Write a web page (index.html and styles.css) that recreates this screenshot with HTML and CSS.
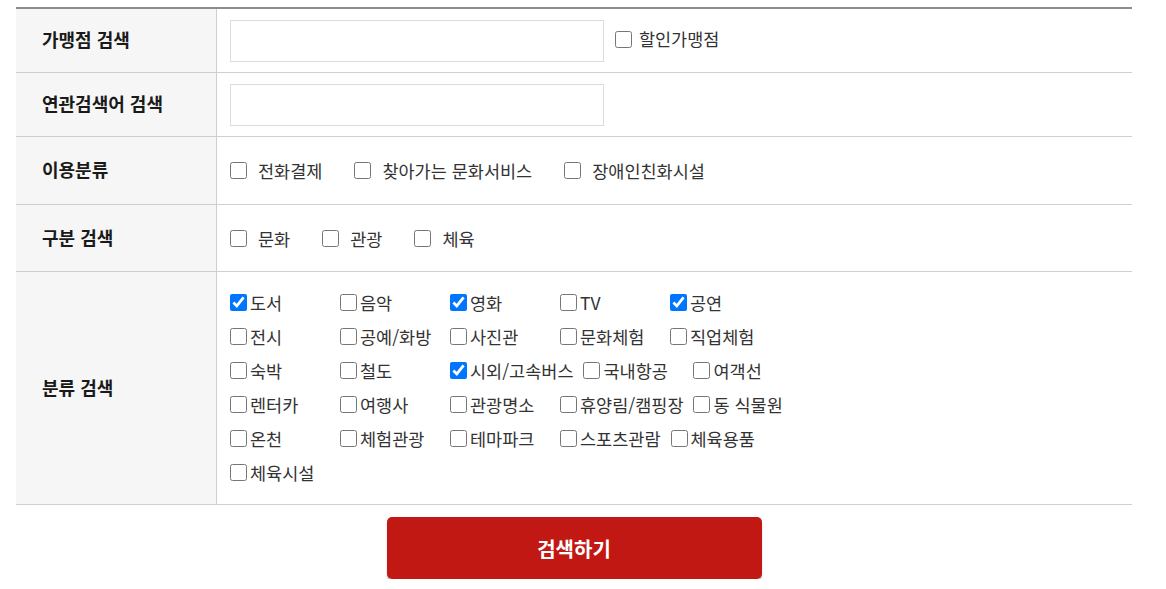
FILE: index.html
```html
<!DOCTYPE html>
<html lang="ko">
<head>
  <meta charset="UTF-8">
  <meta name="viewport" content="width=device-width, initial-scale=1.0">
  <title>가맹점 검색</title>
  <link rel="stylesheet" href="styles.css">
</head>
<body>
  <div class="search">
    <table class="search-table">
      <tr class="row-input">
        <th>가맹점 검색</th>
        <td>
          <input type="text" class="text-box">
          <label class="sale"><input type="checkbox">할인가맹점</label>
        </td>
      </tr>
      <tr class="row-input">
        <th>연관검색어 검색</th>
        <td><input type="text" class="text-box"></td>
      </tr>
      <tr class="row-check">
        <th>이용분류</th>
        <td>
          <div class="check-line">
            <label><input type="checkbox">전화결제</label>
            <label><input type="checkbox">찾아가는 문화서비스</label>
            <label><input type="checkbox">장애인친화시설</label>
          </div>
        </td>
      </tr>
      <tr class="row-check short">
        <th>구분 검색</th>
        <td>
          <div class="check-line">
            <label><input type="checkbox">문화</label>
            <label><input type="checkbox">관광</label>
            <label><input type="checkbox">체육</label>
          </div>
        </td>
      </tr>
      <tr class="row-grid">
        <th>분류 검색</th>
        <td>
          <div class="check-grid">
            <label><input type="checkbox" checked>도서</label>
            <label><input type="checkbox">음악</label>
            <label><input type="checkbox" checked>영화</label>
            <label><input type="checkbox">TV</label>
            <label><input type="checkbox" checked>공연</label>
            <label><input type="checkbox">전시</label>
            <label><input type="checkbox">공예/화방</label>
            <label><input type="checkbox">사진관</label>
            <label><input type="checkbox">문화체험</label>
            <label><input type="checkbox">직업체험</label>
            <label><input type="checkbox">숙박</label>
            <label><input type="checkbox">철도</label>
            <label><input type="checkbox" checked>시외/고속버스</label>
            <label><input type="checkbox">국내항공</label>
            <label><input type="checkbox">여객선</label>
            <label><input type="checkbox">렌터카</label>
            <label><input type="checkbox">여행사</label>
            <label><input type="checkbox">관광명소</label>
            <label><input type="checkbox">휴양림/캠핑장</label>
            <label><input type="checkbox">동 식물원</label>
            <label><input type="checkbox">온천</label>
            <label><input type="checkbox">체험관광</label>
            <label><input type="checkbox">테마파크</label>
            <label><input type="checkbox">스포츠관람</label>
            <label><input type="checkbox">체육용품</label>
            <label><input type="checkbox">체육시설</label>
          </div>
        </td>
      </tr>
    </table>

    <div class="btn-area">
      <button type="button" class="btn-search">검색하기</button>
    </div>
  </div>
</body>
</html>
```

FILE: styles.css
```css
body{
  margin: 0;
  font-family: "Noto Sans CJK KR", "Noto Sans", sans-serif;
  color: #222;
  background: #fff;
}
.search{
  width: 1116px;
  margin: 7px 0 0 16px;
}
.search-table{
  width: 100%;
  border-collapse: collapse;
  border-top: 2px solid #8c8c8c;
}
.search-table th{
  width: 174px;
  padding: 0 0 3px 26px;
  background: #f6f6f6;
  border-right: 1px solid #cfcfcf;
  border-bottom: 1px solid #cfcfcf;
  text-align: left;
  font-size: 18px;
  font-weight: bold;
  color: #1a1a1a;
}
.search-table td{
  padding: 0 0 0 13px;
  border-bottom: 1px solid #cfcfcf;
  font-size: 17.5px;
  color: #333;
}
.row-input td{
  height: 63px;
}
.row-check td{
  height: 67px;
}
.row-check.short td{
  height: 66px;
}
.row-grid td{
  padding-top: 18px;
  padding-bottom: 20px;
}

.text-box{
  width: 374px;
  height: 42px;
  box-sizing: border-box;
  border: 1px solid #dcdcdc;
  vertical-align: middle;
  margin: 0;
}

input[type="checkbox"]{
  width: 17px;
  height: 17px;
  margin: 0;
  vertical-align: middle;
}

.sale{
  display: inline-flex;
  align-items: center;
  margin-left: 6px;
  vertical-align: middle;
  position: relative;
  top: -2px;
}
.sale input{
  margin: 2px 7px 0 0;
}

.check-line{
  display: flex;
  gap: 32px;
  align-items: center;
}
.check-line label{
  display: flex;
  align-items: center;
}
.check-line input{
  margin-right: 11px;
}

.check-grid{
  width: 600px;
  display: flex;
  flex-wrap: wrap;
  row-gap: 10px;
}
.check-grid label{
  display: flex;
  align-items: center;
  height: 24px;
  min-width: 100px;
  margin-right: 10px;
  white-space: nowrap;
}
.check-grid input{
  margin-right: 3px;
}

.btn-area{
  display: flex;
  justify-content: center;
  padding-top: 12px;
}
.btn-search{
  width: 375px;
  height: 62px;
  border: none;
  border-radius: 5px;
  background: #c21814;
  box-shadow: 0 3px 2px #cfcfcf;
  color: #fff;
  font-family: "Noto Sans CJK KR", sans-serif;
  font-size: 20px;
  font-weight: bold;
}
```
